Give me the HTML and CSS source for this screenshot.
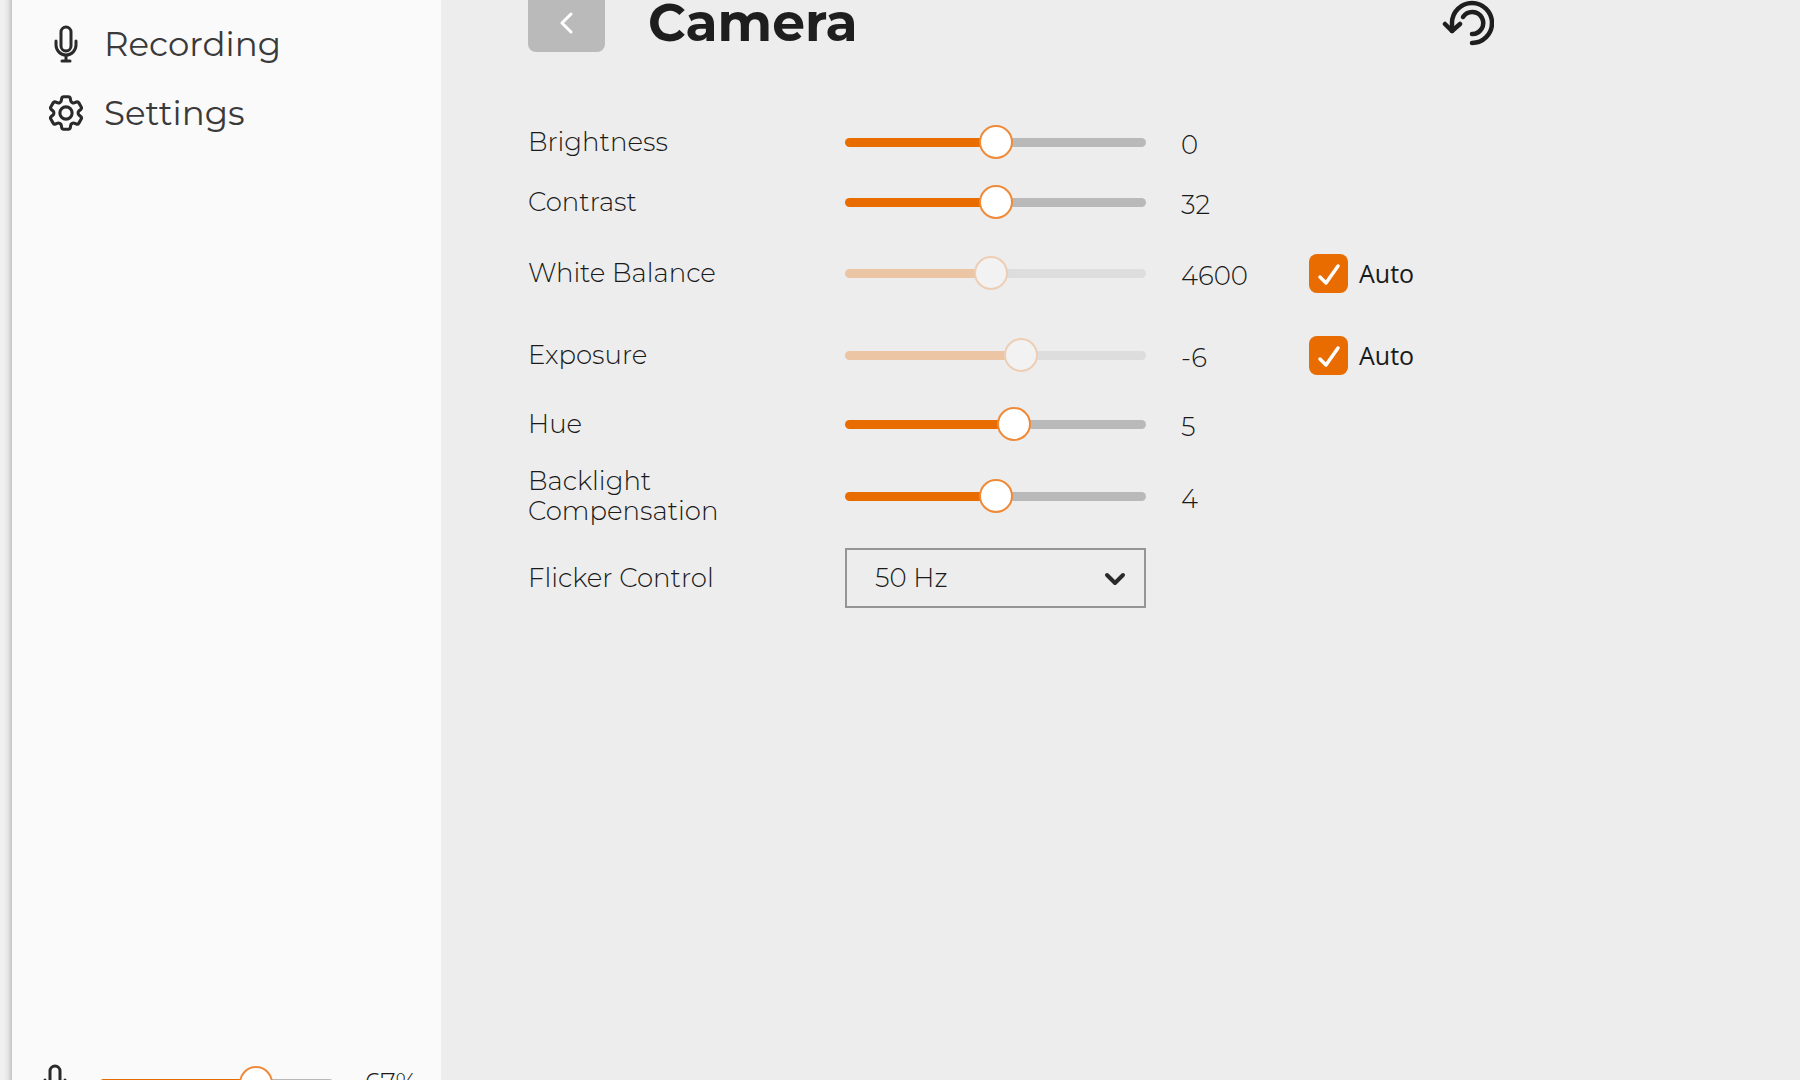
FILE: index.html
```html
<!DOCTYPE html>
<html lang="en">
<head>
  <meta charset="UTF-8">
  <title>Camera settings</title>
  <meta name="viewport" content="width=device-width, initial-scale=1.0">
  <link rel="stylesheet" href="styles.css">
</head>
<body>
  <svg class="sprite" aria-hidden="true">
    <symbol id="icon-mic" viewBox="0 0 36 38">
      <rect x="13" y="2" width="10" height="24" rx="5"/>
      <path d="M8 16v4a10 10 0 0 0 20 0v-4M18 30v6M14 36h8"/>
    </symbol>
  </svg>

  <aside class="sidebar">
    <nav class="menu">
      <a class="menu-item" href="#recording">
        <svg class="icon"><use href="#icon-mic"/></svg>
        Recording
      </a>
      <a class="menu-item" href="#settings">
        <svg class="icon icon-gear" viewBox="2 2 20 20">
          <path d="M9.594 3.94c.09-.542.56-.94 1.11-.94h2.593c.55 0 1.02.398 1.11.94l.213 1.281c.063.374.313.686.645.87.074.04.147.083.22.127.325.196.72.257 1.075.124l1.217-.456a1.125 1.125 0 0 1 1.37.49l1.296 2.247a1.125 1.125 0 0 1-.26 1.431l-1.003.827c-.293.241-.438.613-.43.992a7.723 7.723 0 0 1 0 .255c-.008.378.137.75.43.991l1.004.827c.424.35.534.955.26 1.43l-1.298 2.247a1.125 1.125 0 0 1-1.369.491l-1.217-.456c-.355-.133-.75-.072-1.076.124a6.47 6.47 0 0 1-.22.128c-.331.183-.581.495-.644.869l-.213 1.281c-.09.543-.56.94-1.11.94h-2.594c-.55 0-1.019-.398-1.11-.94l-.213-1.281c-.062-.374-.312-.686-.644-.87a6.52 6.52 0 0 1-.22-.127c-.325-.196-.72-.257-1.076-.124l-1.217.456a1.125 1.125 0 0 1-1.369-.49l-1.297-2.247a1.125 1.125 0 0 1 .26-1.431l1.004-.827c.292-.24.437-.613.43-.991a6.932 6.932 0 0 1 0-.255c.007-.38-.138-.751-.43-.992l-1.004-.827a1.125 1.125 0 0 1-.26-1.43l1.297-2.247a1.125 1.125 0 0 1 1.37-.491l1.216.456c.356.133.751.072 1.076-.124.072-.044.146-.086.22-.128.332-.183.582-.495.644-.869l.214-1.28Z"/>
          <circle cx="12" cy="12" r="3.4"/>
        </svg>
        Settings
      </a>
    </nav>
    <div class="mic-level">
      <svg class="icon"><use href="#icon-mic"/></svg>
      <span class="slider" style="--fill: 67%">
        <input type="range" min="0" max="100" value="67" aria-label="Microphone level">
      </span>
      <output class="mic-value">67%</output>
    </div>
  </aside>

  <main class="content">
    <div class="panel">
      <header class="panel-header">
        <button class="back-btn" type="button" aria-label="Back">
          <svg width="14" height="22" viewBox="0 0 14 22"><path d="M11 2L2 11l9 9"/></svg>
        </button>
        <h1 class="panel-title">Camera</h1>
        <button class="reset-btn" type="button" aria-label="Reset">
          <svg width="52" height="46" viewBox="0 0 52 46">
            <path d="M30 43a20 20 0 1 0-20-20v8"/>
            <path d="M3 24l7 7 8-7"/>
            <path d="M21 17a11 11 0 1 1 9 17"/>
          </svg>
        </button>
      </header>

      <form class="controls">
        <div class="row">
          <label for="brightness">Brightness</label>
          <span class="slider" style="--fill: 50%"><input type="range" id="brightness" min="-64" max="64" value="0"></span>
          <output class="value" for="brightness">0</output>
        </div>
        <div class="row">
          <label for="contrast">Contrast</label>
          <span class="slider" style="--fill: 50%"><input type="range" id="contrast" min="0" max="64" value="32"></span>
          <output class="value" for="contrast">32</output>
        </div>
        <div class="row row-auto">
          <label for="white-balance">White Balance</label>
          <span class="slider disabled" style="--fill: 48.6%"><input type="range" id="white-balance" min="2800" max="6500" value="4600" disabled></span>
          <output class="value" for="white-balance">4600</output>
          <label class="auto"><input type="checkbox" checked>Auto</label>
        </div>
        <div class="row row-auto">
          <label for="exposure">Exposure</label>
          <span class="slider disabled" style="--fill: 58.3%"><input type="range" id="exposure" min="-13" max="-1" value="-6" disabled></span>
          <output class="value" for="exposure">-6</output>
          <label class="auto"><input type="checkbox" checked>Auto</label>
        </div>
        <div class="row row-short">
          <label for="hue">Hue</label>
          <span class="slider" style="--fill: 56.3%"><input type="range" id="hue" min="-40" max="40" value="5"></span>
          <output class="value" for="hue">5</output>
        </div>
        <div class="row row-tall">
          <label for="backlight">Backlight<br>Compensation</label>
          <span class="slider" style="--fill: 50%"><input type="range" id="backlight" min="0" max="8" value="4"></span>
          <output class="value" for="backlight">4</output>
        </div>
        <div class="row row-select">
          <label for="flicker">Flicker Control</label>
          <span class="select">
            <select id="flicker">
              <option>50 Hz</option>
              <option>60 Hz</option>
            </select>
            <svg class="select-arrow" width="22" height="14" viewBox="0 0 22 14"><path d="M3 3l8 8 8-8"/></svg>
          </span>
        </div>
      </form>
    </div>
  </main>
</body>
</html>
```

FILE: styles.css
```css
* {
  box-sizing: border-box;
}
body {
  margin: 0;
  height: 100vh;
  overflow: hidden;
  display: flex;
  font-family: Montserrat, Inter, "Open Sans", sans-serif;
  font-size: 26px;
  font-weight: 300;
  line-height: 30px;
  color: #1a1a1a;
  background: #ededed;
}
svg {
  display: block;
  flex-shrink: 0;
  fill: none;
  stroke: #2a2a2a;
  stroke-linecap: round;
  stroke-linejoin: round;
}
.sprite {
  position: absolute;
  width: 0; height: 0;
}
.icon {
  width: 36px; height: 38px;
  stroke-width: 3;
}
.icon-gear {
  height: 36px;
  stroke-width: 1.7;
}

/* sidebar */
.sidebar {
  width: 441px;
  flex-shrink: 0;
  display: flex;
  flex-direction: column;
  justify-content: space-between;
  border-left: 12px solid transparent;
  background:
    linear-gradient(#fafafa, #fafafa) padding-box,
    linear-gradient(90deg, #f0f0f0 4px, #e4e4e4 8px, #c4c4c4 12px) border-box 0 0 / 12px 100% no-repeat;
}
.menu {
  padding: 9px 36px 0;
}
.menu-item {
  display: flex;
  align-items: center;
  gap: 20px;
  height: 69px;
  font-size: 34px;
  font-weight: 400;
  color: #3a3a3a;
  text-decoration: none;
}
/* last line of the sidebar runs past the window edge */
.mic-level {
  display: flex;
  align-items: center;
  height: 40px;
  margin-bottom: -23px;
  padding: 0 26px 0 25px;
}
.mic-level .slider {
  flex: 1;
  margin: 0 31px 0 26px;
}
.mic-value {
  width: 50px;
}

/* range slider, the thumb centre travels the full track */
.slider {
  display: flex;
  align-items: center;
  height: 9px;
  border-radius: 5px;
  background: linear-gradient(90deg, #e86c00 var(--fill), #b9b9b9 var(--fill));
}
.slider input {
  -webkit-appearance: none;
  appearance: none;
  flex: 1 0 calc(100% + 34px);
  height: 34px;
  margin: 0 -17px;
  background: none;
  cursor: pointer;
}
.slider input::-webkit-slider-thumb {
  -webkit-appearance: none;
  width: 34px; height: 34px;
  border: 2px solid #ee8a38;
  border-radius: 50%;
  background: #fff;
}
.slider.disabled {
  opacity: 0.3;
}

/* main panel */
.content {
  flex: 1;
  padding: 0 87px;
}
.panel {
  max-width: 966px;
}
.panel-header {
  display: flex;
  align-items: center;
  height: 59px;
  margin-top: -7px;
}
.back-btn {
  display: flex;
  align-items: center;
  justify-content: center;
  width: 77px; height: 59px;
  padding: 0;
  border: none;
  border-radius: 8px;
  background: #bababa;
  cursor: pointer;
}
.back-btn svg {
  stroke: #fff;
  stroke-width: 3;
}
.panel-title {
  margin: 0 0 0 43px;
  font-size: 52px;
  font-weight: 700;
  line-height: 59px;
  color: #1e1e1e;
}
.reset-btn {
  margin-left: auto;
  padding: 0;
  border: none;
  background: none;
  cursor: pointer;
}
.reset-btn svg {
  stroke: #1e1e1e;
  stroke-width: 4.5;
}
.controls {
  padding-top: 60px;
}
.row {
  display: grid;
  grid-template-columns: 317px 301px 128px auto;
  align-items: center;
  justify-content: start;
  height: 60px;
}
.row-auto {
  height: 82px;
}
.row-short {
  height: 56px;
}
.row-tall {
  height: 88px;
}
.row-select {
  height: 76px;
}
.value {
  padding: 5px 0 0 35px;
}
.auto {
  display: flex;
  align-items: center;
  gap: 11px;
  margin-left: 35px;
  font-family: "Open Sans", "Noto Sans", sans-serif;
  font-size: 25px;
  font-weight: 400;
}
.auto input {
  -webkit-appearance: none;
  appearance: none;
  width: 39px; height: 39px;
  margin: 0;
  border-radius: 8px;
  background: #e86c00 url("data:image/svg+xml,%3Csvg xmlns='http://www.w3.org/2000/svg' viewBox='0 0 39 39'%3E%3Cpath d='M11 23l6 6L29 12' fill='none' stroke='%23fff' stroke-width='3.5' stroke-linecap='round' stroke-linejoin='round'/%3E%3C/svg%3E");
}
.select {
  position: relative;
}
.select select {
  -webkit-appearance: none;
  appearance: none;
  display: block;
  width: 100%;
  height: 60px;
  padding: 0 28px;
  border: 2px solid #959595;
  border-radius: 0;
  background: transparent;
  font: inherit;
  color: inherit;
}
.select-arrow {
  position: absolute;
  top: 24px;
  right: 20px;
  stroke-width: 4;
  pointer-events: none;
}
```
